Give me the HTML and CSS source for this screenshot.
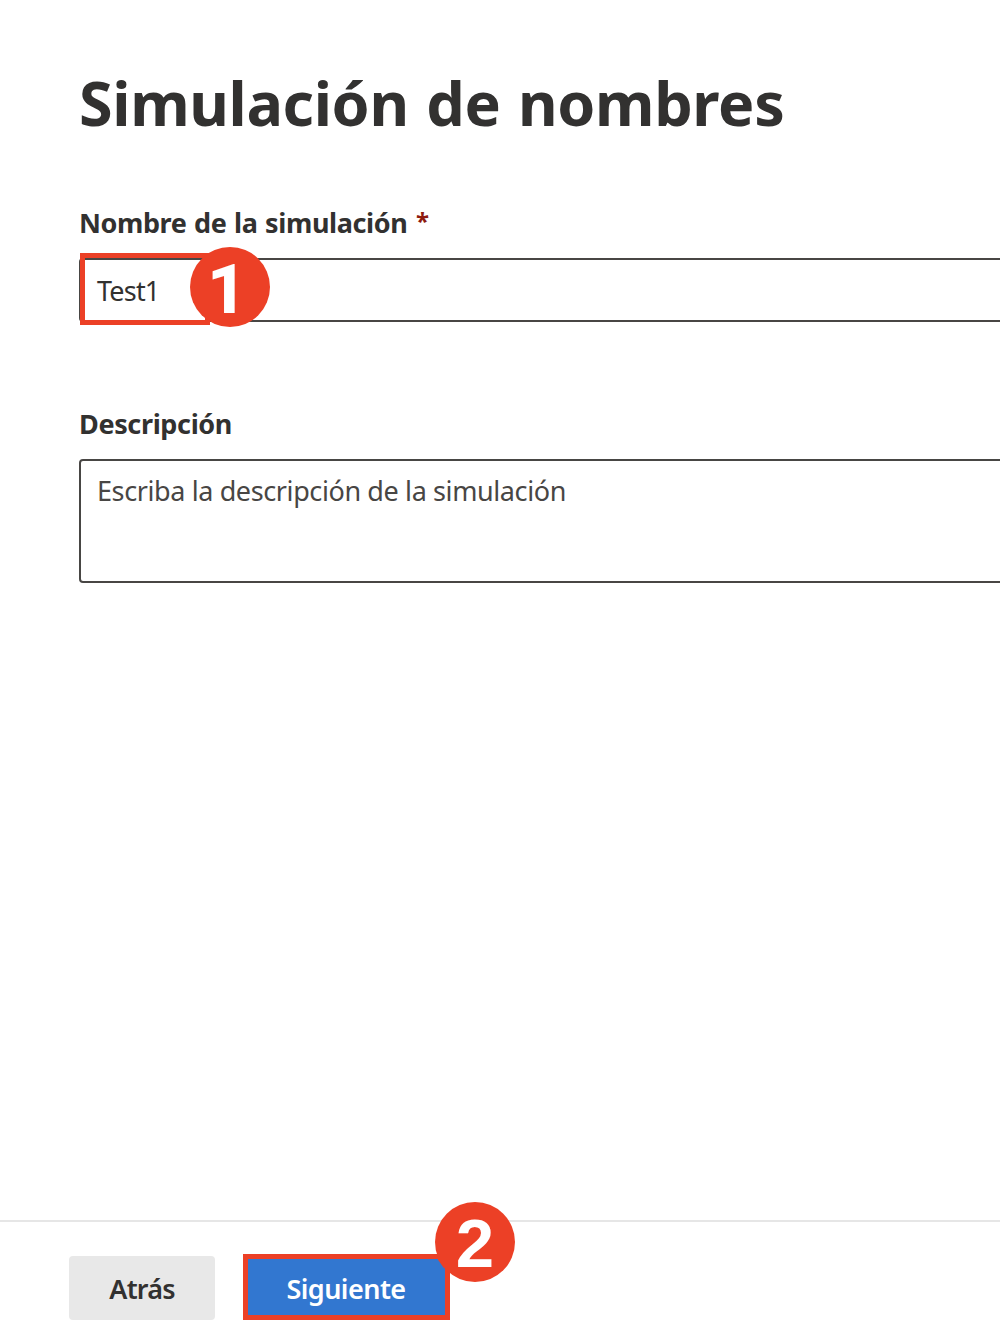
FILE: index.html
```html
<!DOCTYPE html>
<html lang="es">
<head>
<meta charset="utf-8">
<title>Simulación de nombres</title>
<link rel="stylesheet" href="styles.css">
</head>
<body>
<main class="content">
  <h1 class="title">Simulación de nombres</h1>
  <section class="field">
    <label class="label">Nombre de la simulación <span class="required">*</span></label>
    <div class="input"><span class="value">Test1</span>
      <span class="mark"></span><span class="badge badge-one">1</span>
    </div>
  </section>
  <section class="field field-desc">
    <label class="label desc-label">Descripción</label>
    <div class="textarea"><span>Escriba la descripción de la simulación</span></div>
  </section>
</main>
<footer class="footer">
  <button class="button back">Atrás</button>
  <button class="button next">Siguiente<span class="corner"></span><b class="badge badge-two">2</b></button>
</footer>
</body>
</html>
```
FILE: styles.css
```css
* { box-sizing: border-box; }
body {
  margin: 0;
  height: 1340px;
  overflow: hidden;
  display: flex;
  flex-direction: column;
  background: #fff;
  color: #323130;
  font-family: "Noto Sans", "Open Sans", sans-serif;
}
.content { flex: 1; padding: 63px 0 0 79px; }
.title { margin: 0; font-size: 61px; line-height: 80px; height: 80px; font-weight: 700; letter-spacing: -.35px; word-spacing: 2px; white-space: nowrap; }
.field { margin-top: 60px; }
.field-desc { margin-top: 82px; }
.label { display: block; height: 40px; line-height: 40px; font-size: 27px; font-weight: 700; letter-spacing: -.4px; word-spacing: 1px; white-space: nowrap; }
.desc-label { letter-spacing: -.36px; }
.required { display: inline-block; margin-left: 1px; font-size: 24px; line-height: 20px; vertical-align: 3px; color: #8e1b10; }
.input, .textarea {
  position: relative;
  width: 960px;
  border: 2px solid #484644;
  border-radius: 4px;
  padding: 0 16px;
  font-size: 27px;
  white-space: nowrap;
}
.input { margin-top: 15px; height: 64px; line-height: 62px; }
.value { letter-spacing: -.8px; }
.textarea { margin-top: 15px; height: 124px; line-height: 60px; color: #484644; letter-spacing: -.39px; }
.mark { position: absolute; left: -1px; top: -7px; width: 130px; height: 72px; border: 5px solid #ec4026; }
.badge {
  position: absolute;
  width: 80px;
  height: 80px;
  border-radius: 50%;
  background: #ec4026;
  color: #fff;
  font: 700 69px/84px "Liberation Sans", sans-serif;
  letter-spacing: 0;
  text-align: center;
}
.badge-one { left: 109px; top: -13px; font: 800 69px/86px Roboto, sans-serif; padding-right: 6px; }
.footer { height: 120px; border-top: 2px solid #e6e6e6; padding: 34px 0 0 69px; display: flex; align-items: flex-start; gap: 28px; }
.button { position: relative; border: 0; padding: 0; height: 64px; border-radius: 4px; font: 600 27px/66px "Noto Sans", sans-serif; color: #323130; background: #e8e8e8; letter-spacing: -.8px; }
.back { width: 146px; }
.next { width: 207px; height: 66px; margin: -2px 0 0 -.5px; border: 5px solid #ec4026; border-radius: 0; background: #3277d0; color: #fff; line-height: 59px; letter-spacing: -.55px; }
.corner { position: absolute; right: 0; top: 0; width: 7px; height: 10px; background: #ec4026; clip-path: polygon(0 0, 100% 0, 100% 100%); }
.badge-two { left: 187.5px; top: -57px; }
```
